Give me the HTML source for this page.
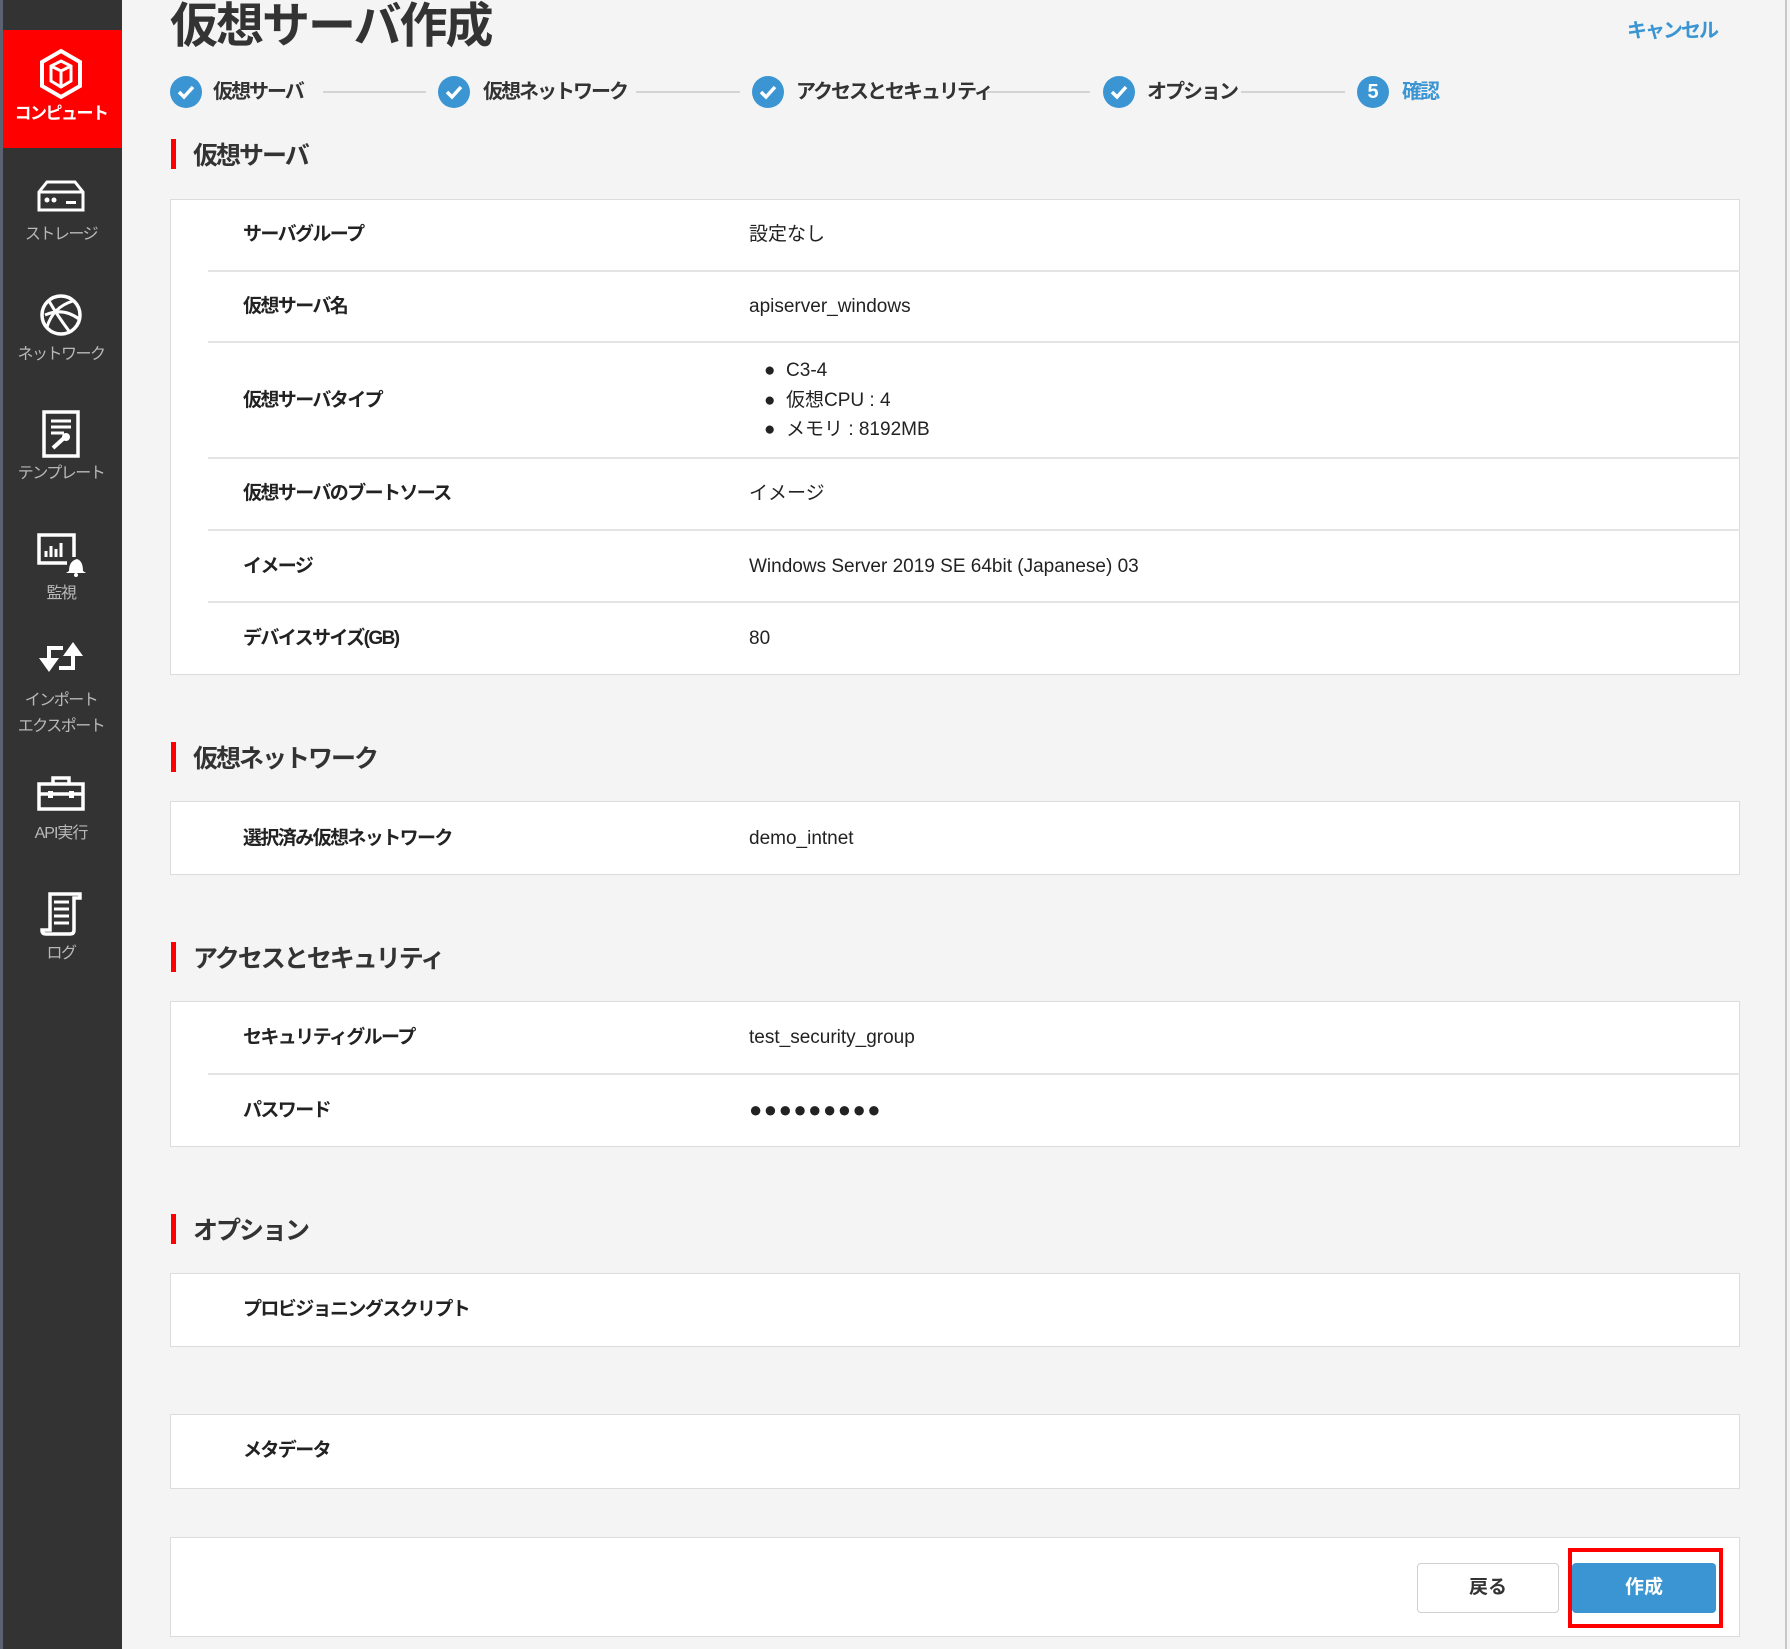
<!DOCTYPE html>
<html><head><meta charset="utf-8"><style>
*{margin:0;padding:0;box-sizing:border-box}
body{width:1790px;height:1649px;background:#f4f4f4;position:relative;overflow:hidden;font-family:"Liberation Sans","Noto Sans CJK JP",sans-serif;color:#222}
.a{position:absolute;white-space:nowrap}
.side{position:absolute;left:0;top:0;width:122px;height:1649px;background:#333}
.strip{position:absolute;left:0;top:0;width:3px;height:1649px;background:#5c6272}
.red{position:absolute;left:3px;top:30px;width:119px;height:118px;background:#f00}
.sl{position:absolute;left:0;width:122px;text-align:center;color:#b8b8b8;font-size:16px;line-height:20px;letter-spacing:-1.5px}
.ic{position:absolute;left:36px}
.card{position:absolute;left:170px;width:1570px;background:#fff;border:1px solid #dcdcdc}
.dv{position:absolute;left:208px;width:1532px;height:2px;background:#e4e4e4}
.lb{position:absolute;left:243px;font-size:19px;font-weight:bold;line-height:24px;color:#222;letter-spacing:-1.6px;white-space:nowrap}
.vl{position:absolute;left:749px;font-size:19px;line-height:24px;color:#222;white-space:nowrap}
.sh{position:absolute;left:193px;font-size:25px;font-weight:bold;color:#333;line-height:32px;letter-spacing:-2px;white-space:nowrap}
.bar{position:absolute;left:171px;width:5px;height:30px;background:#f00}
.ck{position:absolute;width:32px;height:32px;border-radius:50%;background:#3a95d2}
.st{position:absolute;font-size:20px;font-weight:bold;color:#333;line-height:24px;letter-spacing:-2px;white-space:nowrap}
.ln{position:absolute;height:2px;background:#d4d4d4;top:91px}
</style></head><body>
<div class="side"></div><div class="strip"></div><div class="red"></div>
<svg class="ic" style="left:38px;top:48px" width="46" height="52" viewBox="0 0 46 52"><path d="M23 3 L42 14 L42 38 L23 49 L4 38 L4 14Z" fill="none" stroke="#fff" stroke-width="4"/><path d="M23 13 L33 18 L33 33 L23 39 L13 33 L13 18Z M13 18 L23 23 L33 18 M23 23 L23 39" fill="none" stroke="#fff" stroke-width="3"/></svg>
<div class="sl" style="top:104px;color:#fff;font-weight:bold;font-size:17px">コンピュート</div>
<svg class="ic" style="left:37px;top:180px" width="48" height="32" viewBox="0 0 48 32"><path d="M10 2 H38 L46 12 V30 H2 V12Z M2 12 H46" fill="none" stroke="#fff" stroke-width="3"/><circle cx="10" cy="20" r="2.5" fill="#fff"/><circle cx="17" cy="20" r="2.5" fill="#fff"/><rect x="29" y="21" width="10" height="3" fill="#fff"/></svg>
<div class="sl" style="top:225px">ストレージ</div>
<svg class="ic" style="left:39px;top:293px" width="44" height="44" viewBox="0 0 44 44"><circle cx="22" cy="22" r="19" fill="none" stroke="#fff" stroke-width="3.5"/><path d="M10 8 Q18 22 30 38 M34 8 Q14 14 8 34 M6 22 Q24 14 40 26" fill="none" stroke="#fff" stroke-width="3"/></svg>
<div class="sl" style="top:345px">ネットワーク</div>
<svg class="ic" style="left:42px;top:410px" width="38" height="48" viewBox="0 0 38 48"><rect x="2" y="2" width="34" height="44" fill="none" stroke="#fff" stroke-width="3.5"/><path d="M9 11 H29 M9 17 H29 M9 23 H22" stroke="#fff" stroke-width="3"/><path d="M11 38 L22 28" stroke="#fff" stroke-width="4"/><circle cx="24" cy="27" r="4" fill="#fff"/></svg>
<div class="sl" style="top:464px">テンプレート</div>
<svg class="ic" style="left:37px;top:533px" width="50" height="44" viewBox="0 0 50 44"><path d="M37 24 V2 H2 V30 H30" fill="none" stroke="#fff" stroke-width="3.5"/><path d="M9 24 V18 M14 24 V13 M19 24 V16 M24 24 V10" stroke="#fff" stroke-width="3"/><path d="M40 26 Q32 28 32 38 L29 40 H49 L46 38 Q46 28 40 26Z" fill="#fff"/><circle cx="39" cy="42" r="2" fill="#fff"/></svg>
<div class="sl" style="top:584px">監視</div>
<svg class="ic" style="left:37px;top:640px" width="48" height="36" viewBox="0 0 48 36"><path d="M12 20 V8 H26" fill="none" stroke="#fff" stroke-width="4"/><path d="M2 18 H22 L12 32Z" fill="#fff"/><path d="M36 16 V28 H22" fill="none" stroke="#fff" stroke-width="4"/><path d="M26 16 H46 L36 2Z" fill="#fff"/></svg>
<div class="sl" style="top:691px">インポート</div>
<div class="sl" style="top:717px">エクスポート</div>
<svg class="ic" style="left:37px;top:775px" width="48" height="36" viewBox="0 0 48 36"><rect x="2" y="9" width="44" height="25" fill="none" stroke="#fff" stroke-width="3.5"/><path d="M16 9 V3 H32 V9 M2 19 H46" fill="none" stroke="#fff" stroke-width="3.5"/><rect x="11" y="16" width="5" height="7" fill="#fff"/><rect x="32" y="16" width="5" height="7" fill="#fff"/></svg>
<div class="sl" style="top:824px;letter-spacing:-1px">API実行</div>
<svg class="ic" style="left:40px;top:890px" width="44" height="46" viewBox="0 0 44 46"><path d="M10 40 V4 H40 V8 L34 8 V40 Q34 44 30 44 H6 Q2 44 2 40 Z" fill="none" stroke="#fff" stroke-width="3.5"/><path d="M14 12 H29 M14 19 H29 M14 26 H29 M14 33 H29" stroke="#fff" stroke-width="3"/></svg>
<div class="sl" style="top:944px">ログ</div>

<div class="a" style="left:170px;top:-3px;font-size:48px;font-weight:bold;color:#333;line-height:60px;letter-spacing:-2px">仮想サーバ作成</div>
<div class="a" style="left:1627px;top:14px;font-size:20px;font-weight:bold;color:#3a95d2;letter-spacing:-2px">キャンセル</div>

<svg width="0" height="0" style="position:absolute"><defs><path id="cm" d="M9 16 L14 21 L23 11" fill="none" stroke="#fff" stroke-width="3.5"/></defs></svg>
<div class="ck" style="left:170px;top:76px"><svg width="32" height="32"><use href="#cm"/></svg></div>
<div class="st" style="left:213px;top:80px">仮想サーバ</div>
<div class="ln" style="left:323px;width:103px"></div>
<div class="ck" style="left:438px;top:76px"><svg width="32" height="32"><use href="#cm"/></svg></div>
<div class="st" style="left:483px;top:80px">仮想ネットワーク</div>
<div class="ln" style="left:636px;width:104px"></div>
<div class="ck" style="left:752px;top:76px"><svg width="32" height="32"><use href="#cm"/></svg></div>
<div class="st" style="left:796px;top:80px">アクセスとセキュリティ</div>
<div class="ln" style="left:987px;width:103px"></div>
<div class="ck" style="left:1103px;top:76px"><svg width="32" height="32"><use href="#cm"/></svg></div>
<div class="st" style="left:1147px;top:80px">オプション</div>
<div class="ln" style="left:1241px;width:104px"></div>
<div class="ck" style="left:1357px;top:76px;color:#fff;font-weight:bold;font-size:20px;text-align:center;line-height:32px">5</div>
<div class="st" style="left:1402px;top:80px;color:#3a95d2">確認</div>

<div class="bar" style="top:139px"></div><div class="sh" style="top:140px">仮想サーバ</div>
<div class="card" style="top:199px;height:476px"></div>
<div class="dv" style="top:270px"></div><div class="dv" style="top:341px"></div><div class="dv" style="top:457px"></div><div class="dv" style="top:529px"></div><div class="dv" style="top:601px"></div>
<div class="lb" style="top:223px">サーバグループ</div><div class="vl" style="top:223px">設定なし</div>
<div class="lb" style="top:295px">仮想サーバ名</div><div class="vl" style="top:295px">apiserver_windows</div>
<div class="lb" style="top:389px">仮想サーバタイプ</div>
<div class="vl" style="top:359px;left:764px">●&nbsp;&nbsp;C3-4</div>
<div class="vl" style="top:389px;left:764px">●&nbsp;&nbsp;仮想CPU : 4</div>
<div class="vl" style="top:418px;left:764px">●&nbsp;&nbsp;メモリ : 8192MB</div>
<div class="lb" style="top:482px">仮想サーバのブートソース</div><div class="vl" style="top:482px">イメージ</div>
<div class="lb" style="top:555px">イメージ</div><div class="vl" style="top:555px">Windows Server 2019 SE 64bit (Japanese) 03</div>
<div class="lb" style="top:627px">デバイスサイズ(GB)</div><div class="vl" style="top:627px">80</div>

<div class="bar" style="top:742px"></div><div class="sh" style="top:743px">仮想ネットワーク</div>
<div class="card" style="top:801px;height:74px"></div>
<div class="lb" style="top:827px">選択済み仮想ネットワーク</div><div class="vl" style="top:827px">demo_intnet</div>

<div class="bar" style="top:942px"></div><div class="sh" style="top:943px">アクセスとセキュリティ</div>
<div class="card" style="top:1001px;height:146px"></div>
<div class="dv" style="top:1073px"></div>
<div class="lb" style="top:1026px">セキュリティグループ</div><div class="vl" style="top:1026px">test_security_group</div>
<div class="lb" style="top:1099px">パスワード</div><div class="vl" style="top:1098px;font-size:22px;letter-spacing:1.5px">●●●●●●●●●</div>

<div class="bar" style="top:1214px"></div><div class="sh" style="top:1215px">オプション</div>
<div class="card" style="top:1273px;height:74px"></div>
<div class="lb" style="top:1298px">プロビジョニングスクリプト</div>
<div class="card" style="top:1414px;height:75px"></div>
<div class="lb" style="top:1439px">メタデータ</div>

<div class="card" style="top:1537px;height:100px"></div>
<div class="a" style="left:1417px;top:1563px;width:142px;height:50px;border:1px solid #d0d0d0;border-radius:4px;background:#fff;text-align:center;line-height:48px;font-size:19px;font-weight:bold;color:#333">戻る</div>
<div class="a" style="left:1568px;top:1548px;width:155px;height:80px;border:4px solid #f00"></div>
<div class="a" style="left:1572px;top:1563px;width:144px;height:50px;border-radius:4px;background:#3a95d2;text-align:center;line-height:50px;font-size:19px;font-weight:bold;color:#fff">作成</div>
<div class="a" style="left:1785px;top:0;width:2px;height:1649px;background:#c8c8c8"></div>
</body></html>
